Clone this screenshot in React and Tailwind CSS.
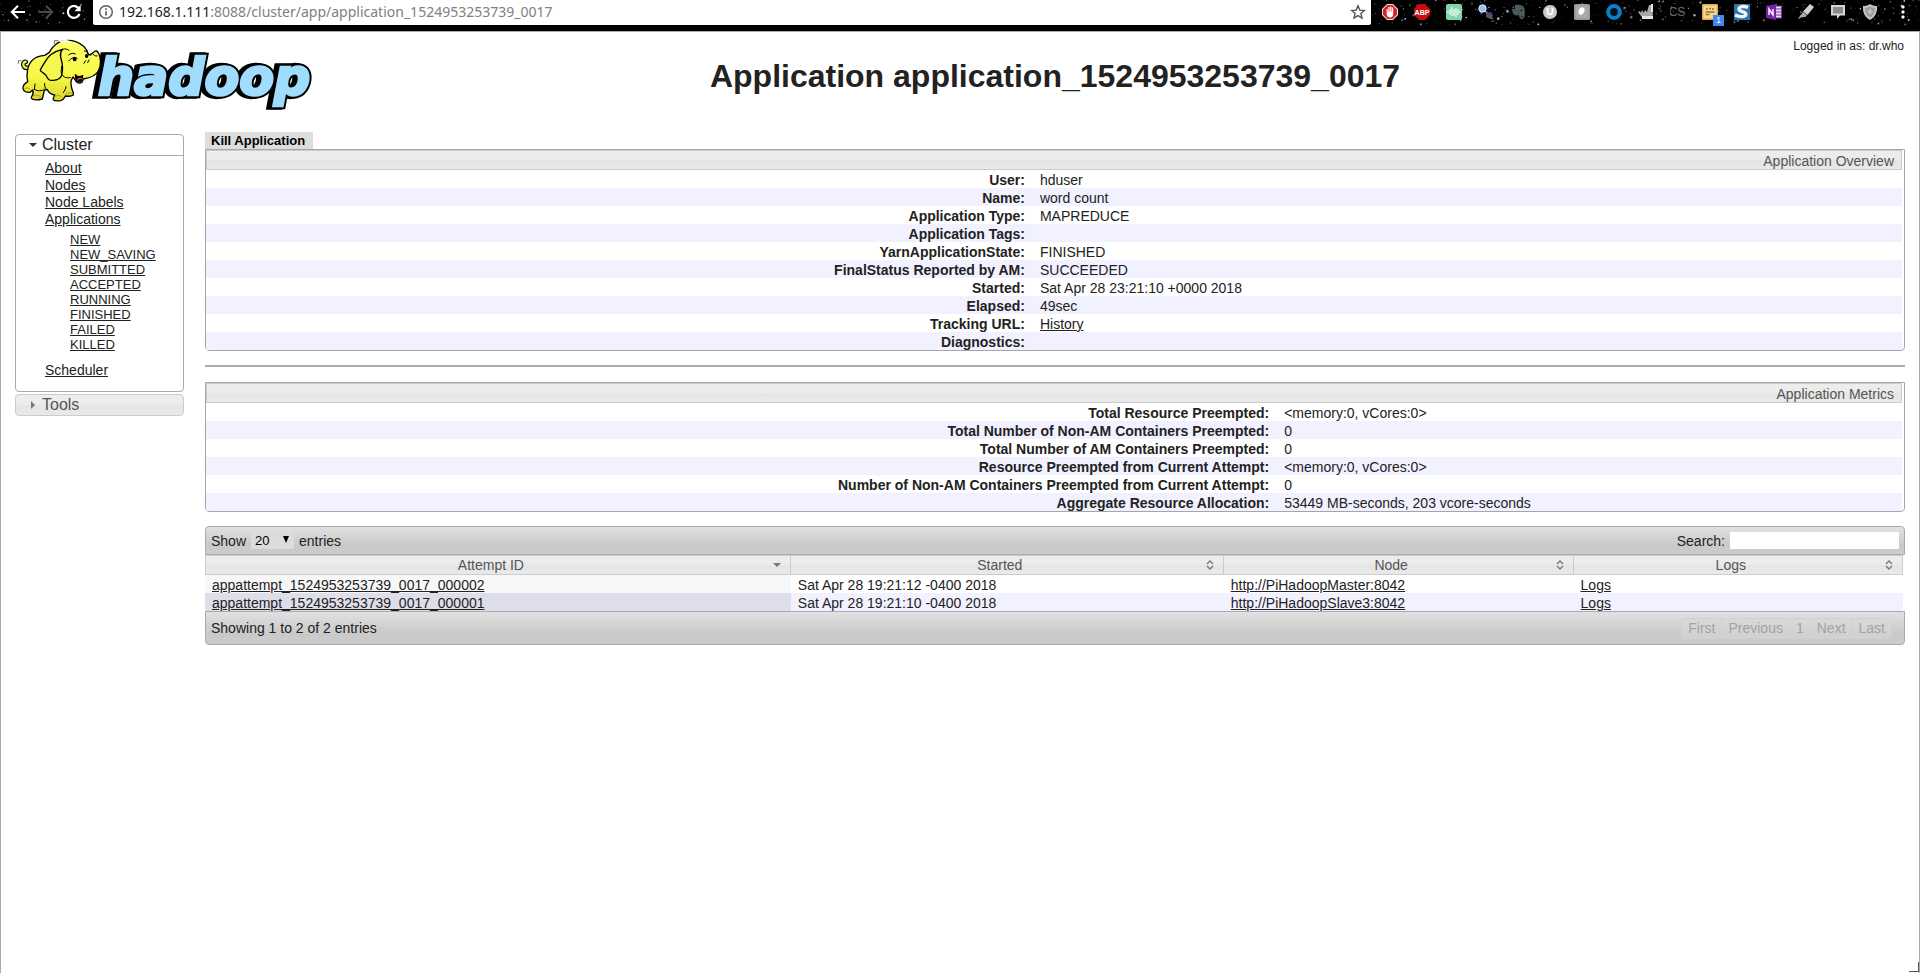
import React from "react";

const HEAD_BG =
  "bg-[linear-gradient(to_bottom,#ededed_0%,#ebebeb_50%,#e5e5e5_51%,#e9e9e9_100%)]";
const BAR_BG =
  "bg-[linear-gradient(to_bottom,#e1e1e1_0%,#cfcfcf_50%,#c9c9c9_70%,#cccccc_100%)]";

function makeStars(count) {
  const stars = [];
  let seed = 77;
  const next = () => {
    seed = (seed * 16807) % 2147483647;
    return seed / 2147483647;
  };
  for (let i = 0; i < count; i++) {
    const inLeft = next() < 0.15;
    stars.push({
      x: inLeft ? next() * 94 : 1370 + next() * 550,
      y: next() * 25,
      r: 0.3 + next() * next() * 1.1,
      o: 0.2 + next() * 0.6,
      c: next() < 0.35 ? "#9fb0dd" : "#ffffff",
    });
  }
  return stars;
}
const STARS = makeStars(460);

function StarField() {
  return (
    <svg className="absolute inset-0 h-full w-full" aria-hidden="true">
      {STARS.map((s, i) => (
        <circle key={i} cx={s.x} cy={s.y} r={s.r} fill={s.c} opacity={s.o} />
      ))}
    </svg>
  );
}

const EXTENSIONS = [
  {
    name: "AdBlock",
    art: (
      <>
        <path d="M5 0h6l5 5v6l-5 5H5l-5-5V5z" fill="#e8e8e8" />
        <path d="M5.4 1h5.2L15 5.4v5.2L10.6 15H5.4L1 10.6V5.4z" fill="#e0201b" />
        <path d="M4.6 8V5h1.2v3h.5V3h1.3v4.5h.5V2.400h1.300V7.500h.5V3.400h1.300V10c0 2-1 3.500-3 3.500S5 12.500 4.600 10z" fill="#fff" />
      </>
    ),
  },
  {
    name: "Adblock Plus",
    art: (
      <>
        <path d="M5 0h6l5 5v6l-5 5H5l-5-5V5z" fill="#c70d0d" />
        <text x="8" y="10.6" textAnchor="middle" fontSize="7" fontWeight="700" fill="#fff">ABP</text>
      </>
    ),
  },
  {
    name: "Sound",
    art: (
      <>
        <rect width="16" height="16" rx="2" fill="#7fd6a8" />
        <path d="M2 7v2M4 5v6M6 3v9M8 5v7M10 4v9M12 5v6M14 7v2" stroke="#fff" strokeWidth="1.100" fill="none" />
      </>
    ),
  },
  {
    name: "Inspector",
    art: (
      <>
        <path d="M6 6l5 5" stroke="#8a93a8" strokeWidth="1.6" />
        <circle cx="4.500" cy="4.500" r="3.700" fill="#8fc4ee" stroke="#dbe9f5" strokeWidth="1" />
        <path d="M8 9l5-1 2 4-3 3-4-2z" fill="#44546f" />
        <path d="M12 13l3 2" stroke="#c25a2b" strokeWidth="1.500" />
      </>
    ),
  },
  {
    name: "Evernote",
    art: (
      <>
        <path d="M5 1c3-.6 6 0 8 1 1.500 1 2 4 1.800 8-.2 3-.8 5-3.300 5-1.500 0-2.300-1-2.100-2.500L8.500 11C6 12 3 11 2.500 8L2 5h3z" fill="#4b5a5c" />
        <path d="M4.300 1.300v3H1.500z" fill="#4b5a5c" />
        <circle cx="11.500" cy="6.500" r=".9" fill="#15191b" />
        <path d="M11 12.800h1.800" stroke="#15191b" strokeWidth="1" />
      </>
    ),
  },
  {
    name: "Ublock",
    art: (
      <>
        <circle cx="8" cy="8" r="7" fill="#c9c9c9" />
        <path d="M5.500 4.500v3.300c0 3.600 5 3.600 5 0V4.500M4.500 4.700h2M9.500 4.700h2" stroke="#fff" strokeWidth="1.600" fill="none" />
      </>
    ),
  },
  {
    name: "Pill",
    art: (
      <>
        <rect width="16" height="16" rx="1.500" fill="#9b9b97" />
        <rect x="2" y="2" width="12" height="12" rx="1" fill="#aaa9a4" />
        <ellipse cx="7.500" cy="7" rx="2.800" ry="3.800" transform="rotate(25 7.500 7)" fill="#fff" />
      </>
    ),
  },
  { name: "Ring", art: <circle cx="8" cy="8" r="5.900" fill="#05101a" stroke="#0a7fc8" strokeWidth="4" /> },
  {
    name: "Pointer",
    art: (
      <>
        <path d="M0 8l2-1 1 2 1-3 2 3 1-3 2 2 2-7h2l1 3 1 7-3 4H6l-3-3z" fill="#a7a7a5" />
        <path d="M4 12h11v3H4zM13 0h2v8h-2z" fill="#e4e4e2" />
      </>
    ),
  },
  {
    name: "CS",
    art: <text x="7" y="12" textAnchor="middle" fontSize="12" fill="#6e6e6e">CS</text>,
  },
  {
    name: "Notes",
    badge: "1",
    art: (
      <>
        <rect width="16" height="16" rx="1" fill="#e3a94a" />
        <rect x="1.500" y="1.500" width="13" height="13" fill="#f8d88c" />
        <path d="M4 5h2M7 4.500h2M10 5h2M3.500 8h9M3.500 10.500h4" stroke="#8b7440" strokeWidth="1.300" />
      </>
    ),
  },
  {
    name: "Stylish",
    art: (
      <>
        <rect width="16" height="16" fill="#2d76ad" />
        <path d="M14 3.500C10 1.500 4.500 2.500 5 5.400c.4 2.600 6.800 1.800 6.800 4.800 0 2.800-6 3.300-10.800.8" stroke="#eef5fb" strokeWidth="3.400" fill="none" />
      </>
    ),
  },
  {
    name: "OneNote",
    art: (
      <>
        <rect x="8" y="2" width="7.500" height="12" fill="#e9dcf2" stroke="#7d2aa5" />
        <path d="M10 5h5M10 8h5M10 11h5" stroke="#7d2aa5" />
        <path d="M0 2l10-2v16L0 14z" fill="#7b22a3" />
        <path d="M3 11V5l4 6V5" stroke="#fff" strokeWidth="1.400" fill="none" />
      </>
    ),
  },
  {
    name: "Highlighter",
    art: (
      <>
        <path d="M12 0l4 3-6.500 8-4.500-3.500z" fill="#cfcfcf" />
        <path d="M5 8l4 3.300-1.600 1.700-4 .2L0 15.500l1.800-3.500z" fill="#a9a9a9" />
      </>
    ),
  },
  {
    name: "Comments",
    art: (
      <>
        <path d="M1 1h14v10.500h-5L7 15v-3.500H1z" fill="#d6d6d6" />
        <rect x="3" y="3" width="10" height="6.500" fill="#8b8b8b" />
      </>
    ),
  },
  {
    name: "Shield",
    art: (
      <>
        <path d="M8 0c2 1.400 4.500 2 7 2 .5 6-1.500 11-7 14C2.500 13 .5 8 1 2c2.500 0 5-.6 7-2z" fill="#c4c4c4" />
        <path d="M8 2.500c1.500 1 3 1.300 4.800 1.400C13 8 11.600 11.300 8 13.500 4.400 11.300 3 8 3.200 3.900 5 3.800 6.500 3.500 8 2.500z" fill="#9c9c9c" />
        <path d="M8 4.500l3 3-3 3.500-3-3.500z" fill="#bdbdbd" />
      </>
    ),
  },
];

function BrowserBar() {
  return (
    <div className="relative flex h-[31px] items-start overflow-hidden bg-black">
      <StarField />
      <div className="relative flex h-6 w-[93px] shrink-0 items-center pl-2">
        <button aria-label="Back" className="h-5 w-5">
          <svg viewBox="0 0 20 20" className="h-5 w-5" fill="none" stroke="#fff" strokeWidth="2">
            <path d="M17 10H4.500M10 3.700L3.700 10l6.300 6.300" />
          </svg>
        </button>
        <button aria-label="Forward" className="ml-2 h-5 w-5">
          <svg viewBox="0 0 20 20" className="h-5 w-5" fill="none" stroke="#4a4a4a" strokeWidth="2">
            <path d="M3 10h12.500M10 3.700l6.300 6.300-6.300 6.300" />
          </svg>
        </button>
        <button aria-label="Reload" className="ml-2 h-5 w-5">
          <svg viewBox="0 0 20 20" className="h-5 w-5" fill="none" stroke="#fff" strokeWidth="2.200">
            <path d="M15.500 12A6 6 0 1 1 14.500 6" />
            <path d="M16.700 3v6.300h-6.300z" fill="#fff" stroke="none" />
          </svg>
        </button>
      </div>
      <div className="relative flex h-[25px] min-w-0 flex-1 items-start rounded-b-[2px] bg-white px-[5px]">
        <svg viewBox="0 0 16 16" className="mt-1 h-4 w-4 shrink-0" fill="none" stroke="#5f5f5f" strokeWidth="1.500" aria-hidden="true">
          <circle cx="8" cy="8" r="6.300" />
          <path d="M8 7.200v4.300M8 4.300v1.700" strokeWidth="1.700" />
        </svg>
        <div className="min-w-0 flex-1 truncate pl-[5px] font-['Noto_Sans',sans-serif] text-sm leading-6 text-[#808080]">
          <span className="text-[#1c1c1c]">192.168.1.111</span>:8088/cluster/app/application_1524953253739_0017
        </div>
        <button aria-label="Bookmark" className="mt-1 h-4 w-4 shrink-0">
          <svg viewBox="0 0 16 16" className="h-4 w-4" fill="none" stroke="#555" strokeWidth="1.400">
            <path d="M8 1.800l1.800 4.300 4.600.4-3.500 3 1.100 4.600L8 11.600l-4 2.500 1.100-4.600-3.500-3 4.600-.4z" />
          </svg>
        </button>
      </div>
      <div className="relative flex h-6 shrink-0 items-center pl-[3px]">
        {EXTENSIONS.map((e) => (
          <button key={e.name} aria-label={e.name} className="relative flex h-6 w-8 items-center justify-center">
            <svg viewBox="0 0 16 16" className="h-4 w-4 font-['Liberation_Sans',sans-serif]">{e.art}</svg>
            {e.badge && (
              <span className="absolute left-[19px] top-[15px] h-[11px] w-[11px] bg-[#4285f4] text-center font-['Liberation_Sans',sans-serif] text-[9px] leading-[11px] text-white">
                {e.badge}
              </span>
            )}
          </button>
        ))}
        <button aria-label="Menu" className="flex h-6 w-[34px] items-center justify-center">
          <svg viewBox="0 0 16 16" className="h-4 w-4" fill="#fff">
            <rect x="6.500" y="1.500" width="3" height="3" rx="1" />
            <rect x="6.500" y="6.500" width="3" height="3" rx="1" />
            <rect x="6.500" y="11.500" width="3" height="3" rx="1" />
          </svg>
        </button>
      </div>
    </div>
  );
}

function HadoopLogo() {
  return (
    <svg viewBox="45 108 900 222" className="h-[74px] w-[300px] shrink-0" role="img" aria-label="hadoop">
      <defs>
        <linearGradient id="hide" x1="0" y1="0" x2="0" y2="1">
          <stop offset="0" stopColor="#ffff6a" />
          <stop offset="0.600" stopColor="#f7f845" />
          <stop offset="1" stopColor="#d9d52c" />
        </linearGradient>
      </defs>
      <g
        fontFamily="'DejaVu Sans', sans-serif"
        fontWeight="700"
        fontStyle="italic"
        fontSize="152"
        strokeLinejoin="miter"
      >
        <text x="284" y="286" fill="#000" stroke="#000" strokeWidth="22">hadoop</text>
        <text x="294" y="284" fill="#000" stroke="#000" strokeWidth="20">hadoop</text>
        <text x="294" y="284" fill="#9fdcfe" stroke="#9fdcfe" strokeWidth="8">hadoop</text>
      </g>
      <g stroke="#000" strokeWidth="4" strokeLinejoin="round" strokeLinecap="round">
        <path d="M90 207c-8 3-18 3-23-5-5-9-1-22 9-22 8 0 9 9 3 10-5 1-5 5-2 7 5 3 10 1 15-3z" fill="#f0ef3c" strokeWidth="3.500" />
        <path
          d="M134 166c-28 2-46 18-51 42-3 15-2 28 0 37-8 5-15 12-14 20 1 8 10 13 21 12l8-7c2 7 3 13-2 18-4 5-2 10 7 11 8 1 17 0 24-2l6-26c6-1 8-4 9-2 4 9 10 14 22 16-2 7-6 10-4 14 3 5 14 4 22 3 9-2 10-6 14-14 8 1 19 1 23-2 4-5-1-12-3-18-2-9-6-17-2-28l5-9c4 5 8 10 10 14 4 5 12 6 18 0l3-8c18-3 37-8 45-24 9-17 8-40 1-53-4-8-9-9-13-5-6 5-13 12-18 8-4-15-18-31-38-38-23-8-51-3-66 14-6 6-9 11-13 18z"
          fill="url(#hide)"
        />
        <path d="M187 148c-25 6-43 19-53 39-6 12-14 19-13 25 5 6 13 8 17 14 5 11 9 17 22 15 12-1 20-3 24-13 5-15 5-35-2-56-2-8 0-17 5-24z" fill="#f6f650" />
        <path d="M187 148c9-3 15-1 20 3M185 199c-2 14-3 22 4 29 7 6 13 6 22 5" fill="none" strokeWidth="3" />
        <path d="M226 224c7 8 14 8 22 3-1 10-5 19-12 18-7-2-9-10-10-21z" fill="#000" />
        <path d="M233 240c3-5 8-6 11-4" fill="none" stroke="#dc5a4a" strokeWidth="4" />
        <path d="M206 165c6-6 15-7 20-3M206 183c8-10 18-13 25-8M253 153c6 0 9 3 11 7M256 170c6-5 12-7 17-5M252 190l5-8M263 188l4-8" fill="none" strokeWidth="3" />
        <ellipse cx="224" cy="177" rx="4" ry="5" />
        <ellipse cx="260" cy="168" rx="3" ry="4" />
        <path d="M277 160c4 6 9 9 14 8M103 269l2-17M140 270c-6-7-7-14-6-20M190 278c3-6 8-11 8-18M133 268c-8 6-20 5-28 1" fill="none" strokeWidth="3" />
        <path d="M96 291c8-8 18-8 27 0M163 291c7-6 14-6 20-2M198 283c6-5 12-6 18-3M72 268c5-5 12-6 18-1" fill="none" stroke="#a9a321" strokeWidth="3" />
        <path d="M182 125c10-3 20-3 29 2" stroke="#fffff0" strokeWidth="6" fill="none" />
        <path d="M163 131v-9h11M170 133v-5M55 190v-8h8M59 191" fill="none" stroke="#555" strokeWidth="2.500" />
      </g>
    </svg>
  );
}

const LINK = "underline text-[#222]";
const STATES = ["NEW", "NEW_SAVING", "SUBMITTED", "ACCEPTED", "RUNNING", "FINISHED", "FAILED", "KILLED"];

function Sidebar() {
  return (
    <nav className="w-[169px] shrink-0 pt-[2px]">
      <div className="rounded border border-[#aaa]">
        <button className="flex h-[21px] w-full items-center border-b border-[#aaa] pl-3 text-base leading-5">
          <svg viewBox="0 0 10 10" className="h-[10px] w-[10px]" fill="#333"><path d="M1 3h8L5 7z" /></svg>
          <span className="pl-1">Cluster</span>
        </button>
        <ul className="pb-3 pl-[29px] pt-1 leading-[17px]">
          <li><a href="#about" className={LINK}>About</a></li>
          <li><a href="#nodes" className={LINK}>Nodes</a></li>
          <li><a href="#labels" className={LINK}>Node Labels</a></li>
          <li>
            <a href="#apps" className={LINK}>Applications</a>
            <ul className="pb-[10px] pl-[25px] pt-1 text-[13px] leading-[15px]">
              {STATES.map((s) => (
                <li key={s}><a href={"#" + s} className={LINK}>{s}</a></li>
              ))}
            </ul>
          </li>
          <li><a href="#scheduler" className={LINK}>Scheduler</a></li>
        </ul>
      </div>
      <button className={"mt-[2px] flex h-[22px] w-full items-center rounded border border-[#ccc] pl-3 text-base leading-5 text-[#555] " + HEAD_BG}>
        <svg viewBox="0 0 10 10" className="h-[10px] w-[10px]" fill="#777"><path d="M3 1v8l4-4z" /></svg>
        <span className="pl-1">Tools</span>
      </button>
    </nav>
  );
}

function InfoTable({ title, rows, labelWidth }) {
  return (
    <div className="rounded-b border border-[#a6a6a6] pr-[2px]">
      <div className={"h-5 border border-[#ccc] px-[7px] text-right leading-[20px] text-[#555] " + HEAD_BG}>{title}</div>
      <table className="w-full table-fixed border-collapse">
        <tbody>
          {rows.map(([label, value, href]) => (
            <tr key={label} className="h-[18px] even:bg-[#f1f1ff]">
              <th scope="row" className={"px-[7px] pb-0 pt-[2px] text-right font-bold leading-4 " + labelWidth}>{label}</th>
              <td className="px-2 pb-0 pt-[2px] leading-4">{href ? <a href={href} className={LINK}>{value}</a> : value}</td>
            </tr>
          ))}
        </tbody>
      </table>
    </div>
  );
}

const OVERVIEW = [
  ["User:", "hduser"],
  ["Name:", "word count"],
  ["Application Type:", "MAPREDUCE"],
  ["Application Tags:", ""],
  ["YarnApplicationState:", "FINISHED"],
  ["FinalStatus Reported by AM:", "SUCCEEDED"],
  ["Started:", "Sat Apr 28 23:21:10 +0000 2018"],
  ["Elapsed:", "49sec"],
  ["Tracking URL:", "History", "#history"],
  ["Diagnostics:", ""],
];

const METRICS = [
  ["Total Resource Preempted:", "<memory:0, vCores:0>"],
  ["Total Number of Non-AM Containers Preempted:", "0"],
  ["Total Number of AM Containers Preempted:", "0"],
  ["Resource Preempted from Current Attempt:", "<memory:0, vCores:0>"],
  ["Number of Non-AM Containers Preempted from Current Attempt:", "0"],
  ["Aggregate Resource Allocation:", "53449 MB-seconds, 203 vcore-seconds"],
];

const COLUMNS = [
  ["Attempt ID", "w-[34.5%]"],
  ["Started", "w-[25.5%]"],
  ["Node", "w-[20.6%]"],
  ["Logs", "w-[19.4%]"],
];

const ATTEMPTS = [
  ["appattempt_1524953253739_0017_000002", "Sat Apr 28 19:21:12 -0400 2018", "http://PiHadoopMaster:8042"],
  ["appattempt_1524953253739_0017_000001", "Sat Apr 28 19:21:10 -0400 2018", "http://PiHadoopSlave3:8042"],
];

const CELL = "px-[7px] pb-0 pt-[2px] leading-4";

function AttemptsTable() {
  return (
    <section>
      <div className={"flex h-[29px] items-center justify-between rounded-t border border-[#aaa] px-[5px] " + BAR_BG}>
        <div className="flex items-center">
          <label htmlFor="page-size">Show</label>
          <span className="relative mx-[5px] flex">
            <select id="page-size" defaultValue="20" className="h-[17px] w-[43px] appearance-none bg-[#dcdcdc] pl-1 text-[13px] leading-[17px] text-black">
              <option>20</option>
              <option>50</option>
              <option>100</option>
            </select>
            <svg viewBox="0 0 8 8" className="pointer-events-none absolute right-1 top-1 h-2 w-2"><path d="M1 0h6L4 7z" /></svg>
          </span>
          <span>entries</span>
        </div>
        <div className="flex items-center gap-[5px]">
          <label htmlFor="search">Search:</label>
          <input id="search" type="text" className="h-[17px] w-[169px] bg-white px-1 text-[13px]" />
        </div>
      </div>
      <div className="pr-[2px]">
        <table className="w-full table-fixed border-separate border-spacing-0">
          <thead>
            <tr>
              {COLUMNS.map(([name, width], i) => (
                <th key={name} scope="col" className={"border-b border-r border-t border-[#ccc] p-0 font-normal text-[#555] first:border-l " + HEAD_BG + " " + width}>
                  <div className="flex h-[18px] items-center pl-1 pr-2 leading-[18px]">
                    <span className="flex-1 text-center">{name}</span>
                    {i === 0 ? (
                      <svg viewBox="0 0 10 10" className="h-[10px] w-[10px]" fill="#777"><path d="M1 3h8L5 7z" /></svg>
                    ) : (
                      <svg viewBox="0 0 10 10" className="h-[10px] w-[10px]" fill="none" stroke="#777" strokeWidth="1.400"><path d="M2 4l3-3 3 3M2 6l3 3 3-3" /></svg>
                    )}
                  </div>
                </th>
              ))}
            </tr>
          </thead>
          <tbody>
            {ATTEMPTS.map(([id, started, node], i) => (
              <tr key={id} className="h-[18px] even:bg-[#f1f1ff]">
                <td className={CELL + " " + (i === 0 ? "bg-[#f7f7f7]" : "bg-[#dedeeb]")}>
                  <a href={"#" + id} className={LINK}>{id}</a>
                </td>
                <td className={CELL}>{started}</td>
                <td className={CELL}><a href="#node" className={LINK}>{node}</a></td>
                <td className={CELL}><a href="#logs" className={LINK}>Logs</a></td>
              </tr>
            ))}
          </tbody>
        </table>
      </div>
      <div className={"flex h-[34px] items-center justify-between rounded-b border border-[#aaa] pl-[5px] pr-3 " + BAR_BG}>
        <span>Showing 1 to 2 of 2 entries</span>
        <div className="flex text-[#a3a3a3]">
          {["First", "Previous", "1", "Next", "Last"].map((p) => (
            <button key={p} disabled className="h-[21px] border border-l-0 border-[#d0d0d0] bg-[#dadada]/50 px-[6px] leading-[19px] first:rounded-l first:border-l last:rounded-r">
              {p}
            </button>
          ))}
        </div>
      </div>
    </section>
  );
}

export default function App() {
  return (
    <div className="flex min-h-screen flex-col bg-white font-['Liberation_Sans',Arial,sans-serif] text-sm text-[#222]">
      <BrowserBar />
      <div className="relative flex-1 border-l border-r border-t border-[#aaa] pl-[14px] pr-[14px]">
        <header className="relative flex h-[100px]">
          <div className="w-[190px] shrink-0 pt-1">
            <div className="flex w-[300px]"><HadoopLogo /></div>
          </div>
          <h1 className="flex-1 pt-[26px] text-center text-[32px] font-bold leading-9">
            Application application_1524953253739_0017
          </h1>
          <div className="absolute right-px top-[6px] text-xs leading-4">Logged in as: dr.who</div>
        </header>
        <div className="flex gap-[21px]">
          <Sidebar />
          <main className="min-w-0 flex-1">
            <button className="block h-[17px] bg-[#ddd] pl-[6px] pr-2 text-[13px] font-bold leading-[17px] text-black">
              Kill Application
            </button>
            <InfoTable title="Application Overview" rows={OVERVIEW} labelWidth="w-[48.7%]" />
            <hr className="mb-[15px] mt-[14px] border-0 border-t-2 border-[#aaa]" />
            <InfoTable title="Application Metrics" rows={METRICS} labelWidth="w-[63.1%]" />
            <div className="pt-[14px]"><AttemptsTable /></div>
          </main>
        </div>
        <span className="absolute bottom-px right-0 h-[10px] w-[10px] border-b border-r border-[#555] [clip-path:polygon(100%_0,100%_100%,0_100%,0_90%,90%_90%,90%_0)]" />
      </div>
    </div>
  );
}
